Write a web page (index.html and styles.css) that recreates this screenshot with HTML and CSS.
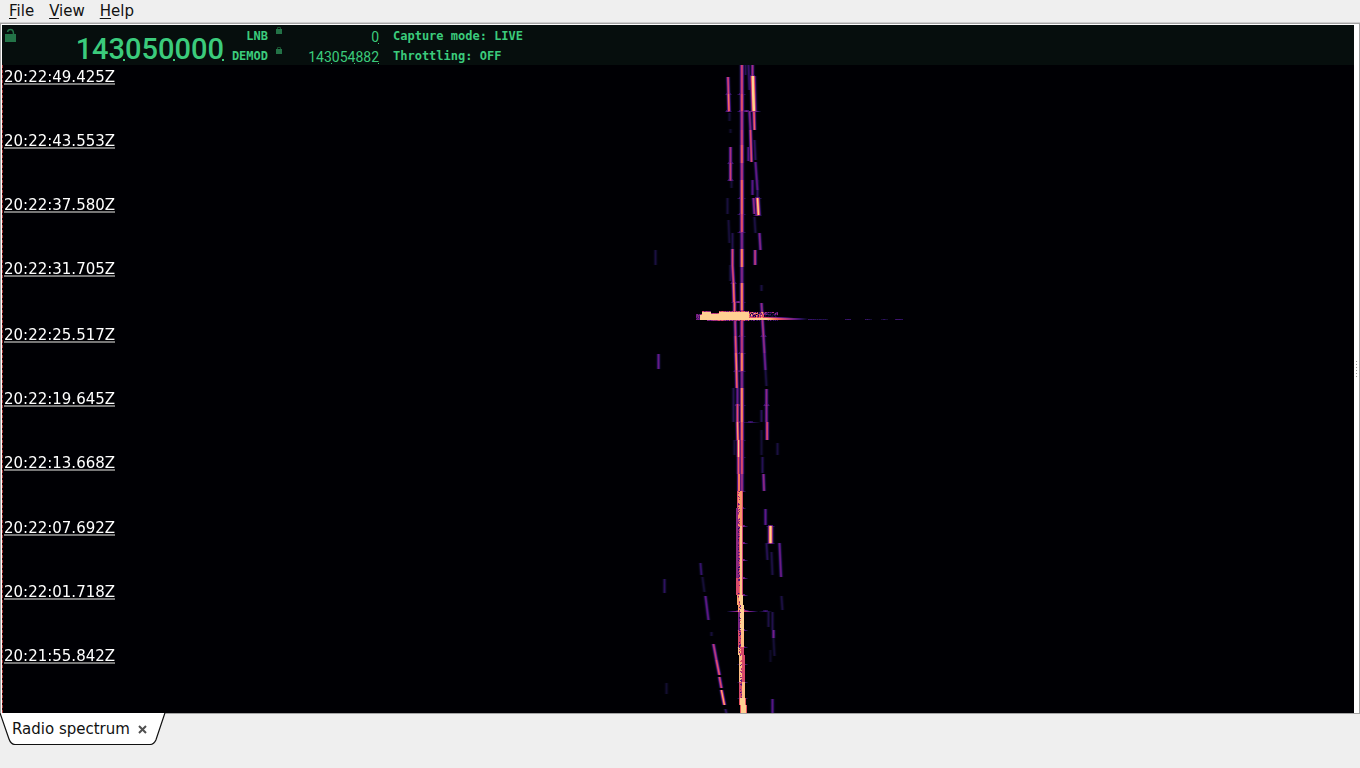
FILE: index.html
```html
<!DOCTYPE html>
<html lang="en">
<head>
<meta charset="utf-8">
<title>Radio spectrum</title>
<link rel="stylesheet" href="styles.css">
</head>
<body>
<div class="app">
  <nav class="menubar">
    <button class="menu" type="button"><u>F</u>ile</button>
    <button class="menu" type="button"><u>V</u>iew</button>
    <button class="menu" type="button"><u>H</u>elp</button>
  </nav>

  <main class="panel">
    <section class="view">
      <header class="status">
        <button class="lock lock-main" type="button" aria-label="Lock frequency">
          <svg width="12" height="15" viewBox="0 0 12 15"><path d="M0 6h11v8H0z" fill="#237347"/><path d="M2.500 4Q3 1.500 5.500 1.500Q8.500 1.500 8.500 6" fill="none" stroke="#237347" stroke-width="1.500"/></svg>
        </button>
        <div class="frequency"><span class="group">143</span><span class="group">050</span><span class="group">000</span></div>
        <div class="names"><span>LNB</span><span>DEMOD</span></div>
        <div class="locks">
          <button class="lock" type="button" aria-label="Lock LNB">
            <svg width="6" height="7" viewBox="0 0 6 7"><path d="M0 2h6v5H0z" fill="#237347"/><path d="M1.500 2V.5h3V2" fill="none" stroke="#19502f"/></svg>
          </button>
          <button class="lock" type="button" aria-label="Lock demodulator">
            <svg width="6" height="7" viewBox="0 0 6 7"><path d="M0 2h6v5H0z" fill="#237347"/><path d="M1.500 2V.5h3V2" fill="none" stroke="#19502f"/></svg>
          </button>
        </div>
        <div class="offsets">
          <div><span class="group">0</span></div>
          <div><span class="group">143</span><span class="group">054</span><span class="group">882</span></div>
        </div>
        <div class="modes"><span>Capture mode: LIVE</span><span>Throttling: OFF</span></div>
      </header>
      <div class="waterfall">
        <canvas class="plot" id="plot" width="1352" height="648"></canvas>
        <time class="mark" style="top:2px">20:22:49.425Z</time>
        <time class="mark" style="top:66px">20:22:43.553Z</time>
        <time class="mark" style="top:130px">20:22:37.580Z</time>
        <time class="mark" style="top:194px">20:22:31.705Z</time>
        <time class="mark" style="top:260px">20:22:25.517Z</time>
        <time class="mark" style="top:324px">20:22:19.645Z</time>
        <time class="mark" style="top:388px">20:22:13.668Z</time>
        <time class="mark" style="top:453px">20:22:07.692Z</time>
        <time class="mark" style="top:517px">20:22:01.718Z</time>
        <time class="mark" style="top:581px">20:21:55.842Z</time>
      </div>
    </section>
    <div class="splitter"><i></i><i></i><i></i><i></i><i></i><i></i></div>
  </main>

  <footer class="tabs">
    <div class="tab">
      <svg class="tab-shape" viewBox="0 0 166 32" preserveAspectRatio="none"><path d="M0 0L9 26Q11 31.500 15 31.500H150Q154 31.500 156 27L165 0" fill="#fff" stroke="#111" stroke-width="1.200"/></svg>
      <button class="tab-name" type="button">Radio spectrum</button>
      <button class="close" type="button" aria-label="Close tab"><svg width="9" height="9" viewBox="0 0 9 9"><path d="M1 1l7 7M8 1l-7 7" stroke="#505050" stroke-width="2"/></svg></button>
    </div>
  </footer>
</div>
<script src="plot.js"></script>
</body>
</html>
```
FILE: styles.css
```css
* { box-sizing: border-box; }
body {
  margin: 0;
  background: #efefef;
  color: #111;
  font: 15px/20px "DejaVu Sans", sans-serif;
}
button {
  margin: 0;
  padding: 0;
  border: 0;
  background: none;
  color: inherit;
  font: inherit;
}
svg { display: block; }
.app { display: flex; flex-direction: column; height: 100vh; }
.menubar {
  display: flex;
  gap: 15px;
  height: 23px;
  padding: 1px 9px 0;
  border-bottom: 1px solid #cfcfcf;
}
.menu { height: 20px; }
.menu u { text-underline-offset: 2px; text-decoration-thickness: 1px; }
.panel {
  flex: 1;
  display: flex;
  min-height: 0;
  padding: 1px 0 0 1px;
  background: #fff;
  border: 1px solid #a4a4a4;
}
.view { flex: 1; min-width: 0; display: flex; flex-direction: column; }
.status {
  display: flex;
  height: 40px;
  flex: none;
  overflow: hidden;
  background: #060e0d;
  color: #3bcb7c;
  font: bold 12px/20px "DejaVu Sans Mono", monospace;
}
.lock { display: block; }
.lock-main { width: 20px; padding: 3px 0 0 3px; align-self: flex-start; }
.frequency {
  width: 202px;
  padding-top: 4px;
  text-align: right;
  font: 500 29px/40px Roboto, sans-serif;
}
.group { position: relative; }
.group::after {
  content: "";
  position: absolute;
  right: 0;
  bottom: 5px;
  width: 2px;
  height: 2px;
  background: #3bcb7c;
}
.names, .offsets, .modes { display: flex; flex-direction: column; }
.names { width: 44px; text-align: right; margin-top: 1px; }
.locks { width: 16px; display: flex; flex-direction: column; gap: 13px; padding: 2px 0 0 8px; }
.offsets {
  width: 95px;
  padding-top: 2px;
  text-align: right;
  font: 14px/20px Roboto, sans-serif;
}
.offsets .group::after { bottom: 1px; width: 1px; height: 1px; }
.modes { margin: 1px 0 0 14px; white-space: nowrap; }
.waterfall { position: relative; flex: 1; min-height: 0; overflow: hidden; background: #000004; }
.waterfall::before {
  content: "";
  position: absolute;
  z-index: 1;
  inset: 0 auto 0 0;
  width: 1px;
  background: repeating-linear-gradient(#a83838 0 3px, #300 3px 5px);
}
.plot { display: block; width: 100%; height: 100%; }
.mark {
  position: absolute;
  left: 2px;
  height: 18px;
  line-height: 20px;
  color: #fff;
  border-bottom: 2px solid #777;
}
.splitter {
  width: 5px;
  display: flex;
  flex-direction: column;
  align-items: center;
  justify-content: center;
  gap: 2px;
}
.splitter i { width: 1px; height: 1px; background: #999; }
.tabs { height: 55px; margin-top: -1px; }
.tab {
  position: relative;
  display: inline-flex;
  align-items: center;
  gap: 8px;
  height: 32px;
  padding: 0 19px 0 12px;
}
.tab-shape { position: absolute; inset: 0; width: 100%; height: 100%; }
.tab-name, .close { position: relative; }
```
FILE: plot.js
```js
const canvas = document.getElementById("plot");
const ctx = canvas.getContext("2d");
const W = canvas.width, H = canvas.height, X0 = 2, Y0 = 65;
const power = new Float32Array(W * H);
const scale = [[0,0,4],[18,13,49],[51,16,103],[90,22,126],[125,36,130],[163,48,126],[200,62,115],[233,85,98],[249,124,93],[254,168,115],[255,208,146]];
let seed = 7;
function noise() { seed = (seed * 16807) % 2147483647; return seed / 2147483647; }
function put(x, y, v) {
  x = Math.round(x) - X0; y = Math.round(y) - Y0;
  if (x < 0 || y < 0 || x >= W || y >= H) return;
  power[y * W + x] = Math.max(power[y * W + x], v);
}
// x and y at both ends, peak level, half width
function trace(x1, y1, x2, y2, level, half = 1.5) {
  if (level < .3) level *= .75;
  for (let y = y1; y < y2; y++) {
    const c = x1 + (x2 - x1) * (y - y1) / (y2 - y1);
    for (let x = Math.floor(c - 4); x <= c + 5; x++) {
      const d = Math.abs(x - c) / half;
      put(x, y, level * Math.exp(-d * d * 0.8));
    }
  }
}
function knot(x, y, reach, level) {
  for (let d = -reach; d <= reach; d++) {
    const v = level * (1 - Math.abs(d) / (reach + 1));
    put(x + d, y, v);
    if (Math.abs(d) < 3) put(x + d, y - 1, v * .8);
  }
}

[[65,94,.6],[94,111,.68],[111,130,.52],[130,145,.6],[145,163,.72],[163,180,.52],[180,214,.75],[214,232,.68],[232,249,.38],
 [249,267,.82],[267,283,.38],[283,310,.82],[310,336,.6],[336,353,.55],[353,371,.82],[371,388,.4],[388,422,.84],[422,440,.75],
 [440,474,.65],[474,491,.45]].forEach(([a, b, v]) => trace(741.4, a, 741.4, b, v + .04));

[[727.5,77,728,94,.64],[728,94,728.5,111,.78],[729,113,729,121,.14],[730,129,730,133,.12],[730,147,730,163,.5],[730,163,730,180,.6],
 [731,180,731,188,.14],[727,198,727,214,.16],[728,220,729,243,.16],[732,233,732,249,.2],[732,249,732,265,.65],[732,265,733,283,.65],[730,265,730,281,.2],
 [733,283,733.6,302,.78],[734,302,734,320,.74],[734.6,320,735,336,.56],[735,336,735.5,353,.7],[735.5,353,736,370,.84],[736,370,736.4,388,.75],
 [737,388,737,404,.36],[733,388,733,422,.2],[737,404,737,422,.68],[737,422,737.4,440,.88],[738,440,738,457,.98],[734,440,734,455,.15],
 [738,457,738,474,.72],[738.5,474,738.5,491,.88],
 [752,65,752,76,.5],[748,65,749,90,.28],[745,65,745,75,.22],[753.5,112,754,130,.74],[749,111,750,130,.4],[750,130,751,162,.66],
 [748,147,748,161,.3],[754,140,755,160,.24],[755,162,757,190,.33],[752,180,752,195,.3],[753,198,754,214,.45],[757,180,757,198,.25],
 [754,217,755,233,.18],[754.6,250,754.6,265,.58],[759,233,760,250,.42],[761,285,761,291,.17],[761,303,762,320,.45],[762,320,763,336,.52],
 [763,336,764,353,.45],[764,353,765,370,.36],[765,370,766,386,.18],[766,389,766,422,.44],[766.6,422,766.6,440,.68],[761,410,761,422,.22],
 [761,430,761,455,.14],[762,457,762,473,.22],[763,474,763.6,491,.45],[765,509,765,525,.32],[766,543,767,560,.22],[779,543,780.6,577,.35],
 [771,552,772,575,.18],[781,596,782,610,.18],[777,443,777,455,.17],[768,612,768,627,.18],[772,612,772,630,.2],[773,630,773,638,.38],
 [773,638,774,656,.15],[770,650,770,662,.1],[772,699,772,713,.3],
 [700,563,701,575,.28],[702,577,704,592,.15],[705,596,708,620,.32],[711,632,711,636,.15],[713,644,716,660,.57],[716,660,719,675,.7],
 [719,677,721,688,.66],[721,690,724,705,.9],[725,709,726,713,.25],[664,579,664,593,.25],[658,354,658,369,.34],[655,250,655,265,.17],[666,683,666,694,.13]
].forEach(t => trace(...t, 1.3));

trace(752.3, 76, 753.3, 111, 1.15, 1.9);
trace(757, 198, 758, 215, 1, 1.6);
trace(770, 526, 770, 543, 1.1, 1.8);

// lower part of the carrier: two ragged lines that merge
for (let y = 491; y < 713; y++) {
  const c = 740.4 + Math.max(0, y - 600) / 50;
  for (let x = -5; x <= 5; x++) {
    let v;
    if (y < 508) v = x < -3 || x > 2 ? 0 : x === -3 || x === 2 ? .65 : .86;
    else if (y < 526) v = x < -4 || x > 2 ? 0 : x < -2 ? .42 : x > 1 ? .6 : .86;
    else if (y < 595) v = x < -4 || x > 2 ? 0 : x < -1 ? (y < 578 ? .44 : .65) : x > 1 ? .6 : x < 0 ? .75 : .97;
    else if (y < 630) v = x < -3 || x > 2 ? 0 : x < -1 ? (y < 612 ? .88 : .4) : 1;
    else if (y < 698) v = x < -3 || x > 2 ? 0 : (x < 0) === (y < 647 || y > 681) ? .65 : .95;
    else v = Math.abs(x) > 3 ? 0 : Math.abs(x) === 3 ? .7 : 1;
    if (v && (x === -1 || x === -2) && y < 698 && noise() < .4) v *= .3 + noise() * .5;
    put(c + x, y, v);
  }
}
[94,111,198,214,232,302,336,353,371,405,422,440,457,491,508].forEach(y => knot(741, y, 4, .45));
[[728,94],[728,111],[730,163],[730,180],[733,283],[734,302],[736,371],[763,336],[766,405],[737,405],[738,440],[752,76]].forEach(([x, y]) => knot(x, y, 3, .48));
[526,543,560,578,595,630,647,664,682,698].forEach(y => knot(742, y, 5, .5));
knot(753, 111, 7, .55); knot(746, 111, 5, .4); knot(742, 611, 15, .75); knot(742, 610, 6, .7); knot(765, 611, 6, .25); knot(738, 302, 5, .45);
knot(770, 526, 4, .5); knot(770, 543, 4, .5); knot(757, 198, 4, .45); knot(757, 215, 4, .45); knot(750, 422, 9, .25);

// meteor echo
for (let x = 696; x < 778; x++) {
  const top = x < 702 ? 314 : x < 711 ? 311 : x < 719 ? 313 : 311;
  const soft = noise();
  if (x < 749) {
    for (let y = top; y < 320; y++) {
      put(x, y, x < 700 ? .15 + noise() * .35 : y === top ? .35 + soft * .4 : 1);
    }
    if (x > 706) put(x, 320, .25 + soft * .45);
  } else {
    for (let y = 312; y < 318; y++) put(x, y, noise() * (x < 764 ? .95 : y < 315 ? .55 : .15));
    put(x, 320, soft * .35);
  }
}
for (let x = 749; x < 808; x++) {
  const v = Math.min(1, (808 - x) / 42);
  put(x, 318, v); put(x, 319, v);
  put(x, 317, Math.max(0, v - .35));
}
for (let x = 808; x < 903; x++) {
  if (x < 828 || (x > 844 && x < 851) || (x > 864 && x < 872) || (x > 880 && x < 888) || x > 894) put(x, 319, .1 + noise() * .14);
}

const image = ctx.createImageData(W, H);
for (let i = 0; i < power.length; i++) {
  const p = Math.min(power[i], 1) * 10, k = Math.min(9, Math.floor(p)), f = p - k;
  for (let c = 0; c < 3; c++) image.data[i * 4 + c] = scale[k][c] + (scale[k + 1][c] - scale[k][c]) * f;
  image.data[i * 4 + 3] = 255;
}
ctx.putImageData(image, 0, 0);
```
